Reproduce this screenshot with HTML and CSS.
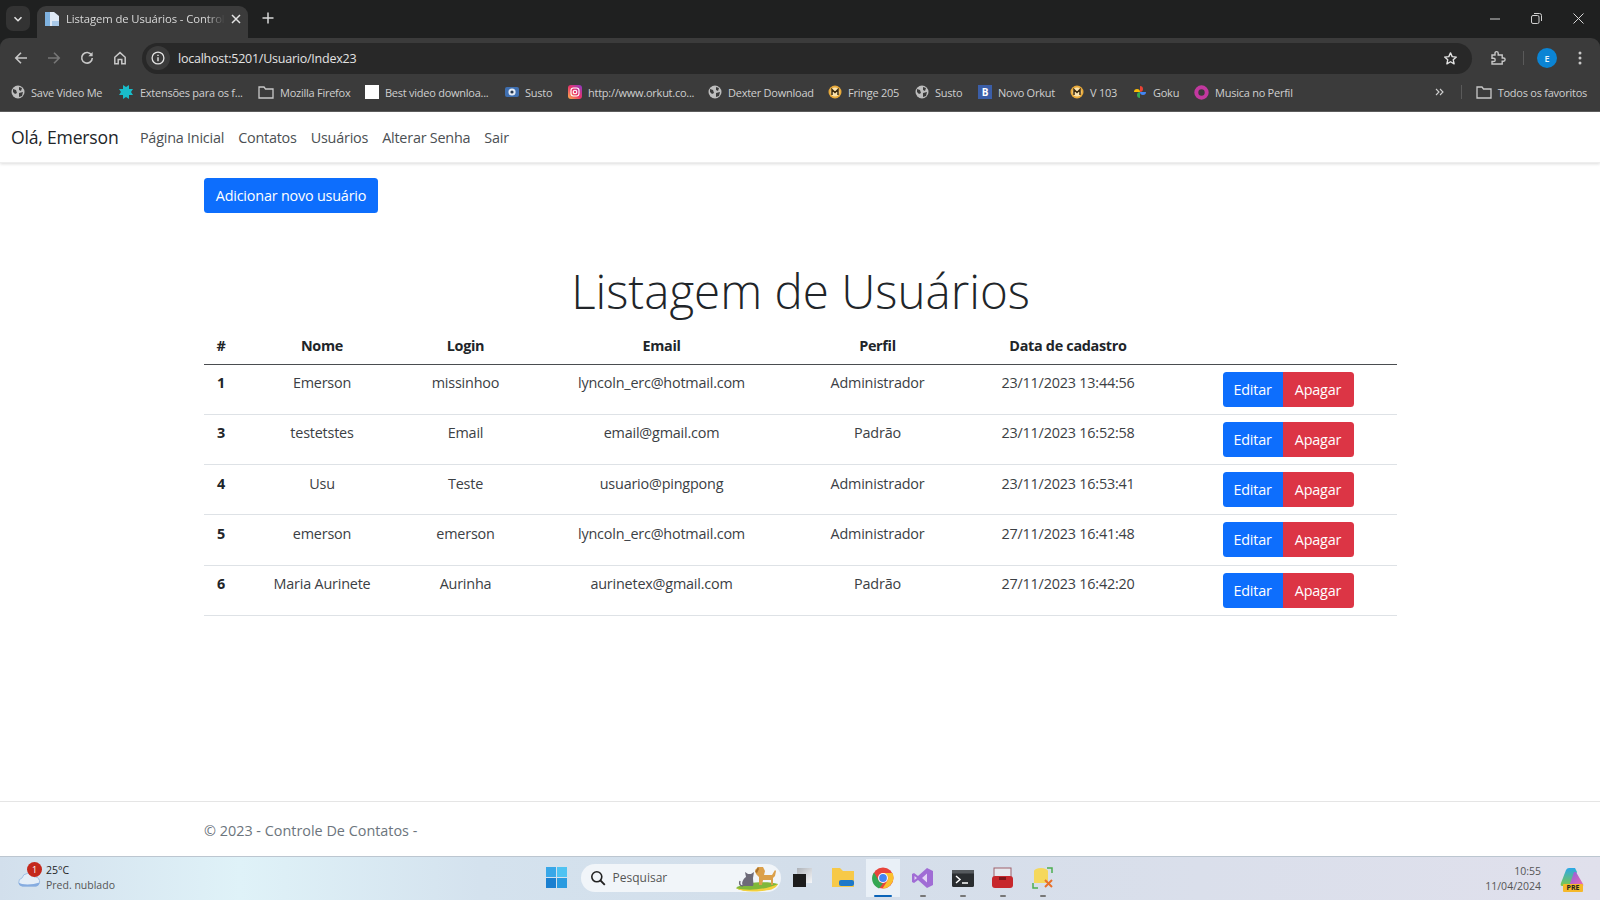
FILE: index.html
```html
<!DOCTYPE html>
<html lang="pt-BR">
<head>
<meta charset="utf-8">
<title>Listagem de Usuários - Controle De Contatos</title>
<link rel="stylesheet" href="styles.css">
</head>
<body>
<header class="browser">
  <div class="tabstrip">
    <button class="tab-search"><svg width="12" height="12" viewBox="0 0 12 12"><path d="M2.500 4.200 6 7.700l3.500-3.500" fill="none" stroke="#e3e3e3" stroke-width="1.600"/></svg></button>
    <div class="tab">
      <svg class="tab-fav" width="16" height="16" viewBox="0 0 16 16"><path d="M1 1h9l5 4v10H1z" fill="#dfe9f5"/><path d="M1 1h5v14H1z" fill="#7fb2e0"/><path d="M8 10h7v5H8z" fill="#a9c9e8"/></svg>
      <span class="tab-title">Listagem de Usuários - Control</span>
      <svg class="tab-x" width="10" height="10" viewBox="0 0 10 10"><path d="M1 1l8 8M9 1 1 9" stroke="#e3e3e3" stroke-width="1.500"/></svg>
    </div>
    <svg class="tab-new" width="12" height="12" viewBox="0 0 12 12"><path d="M6 .5v11M.5 6h11" stroke="#d8d8d8" stroke-width="1.500"/></svg>
    <div class="win-ctrl">
      <svg width="10" height="10" viewBox="0 0 10 10"><path d="M0 5h10" stroke="#d0d0d0"/></svg>
      <svg width="11" height="11" viewBox="0 0 11 11"><rect x=".5" y="2.500" width="7.500" height="8" rx="1.500" fill="none" stroke="#d0d0d0"/><path d="M3 .5h5.500a2 2 0 0 1 2 2V8" fill="none" stroke="#d0d0d0"/></svg>
      <svg width="11" height="11" viewBox="0 0 11 11"><path d="M.5.5l10 10M10.500.5l-10 10" stroke="#d8d8d8"/></svg>
    </div>
  </div>
  <div class="toolbar">
    <svg class="tb-icon" width="14" height="14" viewBox="0 0 14 14"><path d="M13 7H2M7 1.800 1.800 7 7 12.200" fill="none" stroke="#c8c8c8" stroke-width="1.600"/></svg>
    <svg class="tb-icon" width="14" height="14" viewBox="0 0 14 14"><path d="M1 7h11M7 1.800 12.200 7 7 12.200" fill="none" stroke="#777" stroke-width="1.600"/></svg>
    <svg class="tb-icon" width="14" height="14" viewBox="0 0 14 14"><path d="M11.600 4.200A5.300 5.300 0 1 0 12.300 7" fill="none" stroke="#c8c8c8" stroke-width="1.600"/><path d="M12.600 1v4.300H8.300z" fill="#c8c8c8"/></svg>
    <svg class="tb-icon" width="14" height="14" viewBox="0 0 14 14"><path d="M1.800 6.300 7 1.600l5.200 4.700v6.400H8.800V8.600H5.200v4.100H1.800z" fill="none" stroke="#c8c8c8" stroke-width="1.500"/></svg>
    <div class="omnibox">
      <span class="site-info"><svg width="14" height="14" viewBox="0 0 14 14"><circle cx="7" cy="7" r="5.900" fill="none" stroke="#e3e3e3" stroke-width="1.300"/><path d="M7 6.200v4M7 3.700v1.400" stroke="#e3e3e3" stroke-width="1.400"/></svg></span>
      <span class="url">localhost:5201/Usuario/Index23</span>
      <svg class="star" width="15" height="15" viewBox="0 0 24 24"><path d="m12 3 2.700 6 6.600.7-4.900 4.400 1.400 6.500L12 17.200l-5.800 3.400 1.400-6.500-4.900-4.400 6.600-.7z" fill="none" stroke="#e3e3e3" stroke-width="2.200" stroke-linejoin="round"/></svg>
    </div>
    <svg class="puzzle" width="16" height="16" viewBox="0 0 16 16"><path d="M2 5h3V3.200a1.600 1.600 0 0 1 3.200 0V5h4v3h1.300a1.600 1.600 0 0 1 0 3.200h-1.300V14H2v-2.500h1.600a1.600 1.600 0 0 0 0-3.200H2z" fill="none" stroke="#c8c8c8" stroke-width="1.400"/></svg>
    <span class="tb-sep"></span>
    <span class="avatar">E</span>
    <svg class="kebab" width="4" height="14" viewBox="0 0 4 14"><circle cx="2" cy="2" r="1.500" fill="#c8c8c8"/><circle cx="2" cy="7" r="1.500" fill="#c8c8c8"/><circle cx="2" cy="12" r="1.500" fill="#c8c8c8"/></svg>
  </div>
  <nav class="bookmarks">
    <a class="bm"><svg width="14" height="14" viewBox="0 0 14 14"><circle cx="7" cy="7" r="6.500" fill="#bdbdbd"/><path d="M2 4l3 1 1 3-2 1-2-2zM8 2l3 1-1 3-2-1zM8 8l4-1-1 4-3 1z" fill="#3b3b3b"/></svg>Save Video Me</a>
    <a class="bm"><svg width="16" height="16" viewBox="0 0 16 16"><path d="M1 5h4V1l3 2 3-2v4h4l-2 3 2 3h-4v4l-3-2-3 2v-4H1l2-3z" fill="#19bcc9"/></svg>Extensões para os f...</a>
    <a class="bm"><svg width="16" height="14" viewBox="0 0 16 14"><path d="M1 2h5l1.500 2H15v9H1z" fill="none" stroke="#c8c8c8" stroke-width="1.300"/></svg>Mozilla Firefox</a>
    <a class="bm"><span class="white-box"></span>Best video downloa...</a>
    <a class="bm"><svg width="14" height="14" viewBox="0 0 14 14"><rect y="2" width="14" height="10" rx="2" fill="#3f6fb0"/><circle cx="7" cy="7" r="3.600" fill="#e4ecf6"/><circle cx="7" cy="7" r="1.600" fill="#25374f"/></svg>Susto</a>
    <a class="bm"><svg width="14" height="14" viewBox="0 0 14 14"><defs><linearGradient id="ig" x1="0" y1="1" x2="1" y2="0"><stop offset="0" stop-color="#fdb44b"/><stop offset=".5" stop-color="#e8336b"/><stop offset="1" stop-color="#8a3ac8"/></linearGradient></defs><rect width="14" height="14" rx="3" fill="url(#ig)"/><rect x="3" y="3" width="8" height="8" rx="2.400" fill="none" stroke="#fff" stroke-width="1.100"/><circle cx="7" cy="7" r="1.800" fill="none" stroke="#fff" stroke-width="1.100"/></svg>http://www.orkut.co...</a>
    <a class="bm"><svg width="14" height="14" viewBox="0 0 14 14"><circle cx="7" cy="7" r="6.500" fill="#bdbdbd"/><path d="M2 4l3 1 1 3-2 1-2-2zM8 2l3 1-1 3-2-1zM8 8l4-1-1 4-3 1z" fill="#3b3b3b"/></svg>Dexter Download</a>
    <a class="bm"><svg width="14" height="14" viewBox="0 0 14 14"><circle cx="7" cy="7" r="6.500" fill="#e8a93a"/><circle cx="7" cy="7" r="4.500" fill="#fbe3ad"/><path d="M4 10V4.500L7 7.500l3-3V10" fill="none" stroke="#3a2a10" stroke-width="1.500"/></svg>Fringe 205</a>
    <a class="bm"><svg width="14" height="14" viewBox="0 0 14 14"><circle cx="7" cy="7" r="6.500" fill="#bdbdbd"/><path d="M2 4l3 1 1 3-2 1-2-2zM8 2l3 1-1 3-2-1zM8 8l4-1-1 4-3 1z" fill="#3b3b3b"/></svg>Susto</a>
    <a class="bm"><span class="b-box">B</span>Novo Orkut</a>
    <a class="bm"><svg width="14" height="14" viewBox="0 0 14 14"><circle cx="7" cy="7" r="6.500" fill="#e8a93a"/><circle cx="7" cy="7" r="4.500" fill="#fbe3ad"/><path d="M4 10V4.500L7 7.500l3-3V10" fill="none" stroke="#3a2a10" stroke-width="1.500"/></svg>V 103</a>
    <a class="bm"><svg width="14" height="14" viewBox="0 0 14 14"><path d="M7 7V1a3 3 0 0 1 0 6z" fill="#ea4335"/><path d="M7 7h6a3 3 0 0 1-6 0z" fill="#4285f4"/><path d="M7 7v6a3 3 0 0 1 0-6z" fill="#34a853"/><path d="M7 7H1a3 3 0 0 1 6 0z" fill="#fbbc05"/></svg>Goku</a>
    <a class="bm"><svg width="15" height="15" viewBox="0 0 15 15"><circle cx="7.500" cy="7.500" r="5.200" fill="none" stroke="#c2389f" stroke-width="4"/></svg>Musica no Perfil</a>
    <span class="bm-spacer"></span>
    <svg class="chev" width="9" height="8" viewBox="0 0 9 8"><path d="M1 1l3 3-3 3M5 1l3 3-3 3" fill="none" stroke="#d0d0d0" stroke-width="1.100"/></svg>
    <span class="bm-sep"></span>
    <a class="bm-all"><svg width="16" height="14" viewBox="0 0 16 14"><path d="M1 2h5l1.500 2H15v9H1z" fill="none" stroke="#c8c8c8" stroke-width="1.300"/></svg>Todos os favoritos</a>
  </nav>
</header>

<div class="page">
  <nav class="navbar">
    <span class="brand">Olá, Emerson</span>
    <a class="nav-link">Página Inicial</a>
    <a class="nav-link">Contatos</a>
    <a class="nav-link">Usuários</a>
    <a class="nav-link">Alterar Senha</a>
    <a class="nav-link">Sair</a>
  </nav>
  <main class="container">
    <a class="btn btn-primary btn-add">Adicionar novo usuário</a>
    <h1 class="title">Listagem de Usuários</h1>
    <table class="table">
      <colgroup><col class="c1"><col class="c2"><col class="c3"><col class="c4"><col class="c5"><col class="c6"><col class="c7"></colgroup>
      <thead><tr><th>#</th><th>Nome</th><th>Login</th><th>Email</th><th>Perfil</th><th>Data de cadastro</th><th></th></tr></thead>
      <tbody>
        <tr><th>1</th><td>Emerson</td><td>missinhoo</td><td>lyncoln_erc@hotmail.com</td><td>Administrador</td><td>23/11/2023 13:44:56</td><td class="actions"><div class="btn-group"><a class="btn btn-primary">Editar</a><a class="btn btn-danger">Apagar</a></div></td></tr>
        <tr><th>3</th><td>testetstes</td><td>Email</td><td>email@gmail.com</td><td>Padrão</td><td>23/11/2023 16:52:58</td><td class="actions"><div class="btn-group"><a class="btn btn-primary">Editar</a><a class="btn btn-danger">Apagar</a></div></td></tr>
        <tr><th>4</th><td>Usu</td><td>Teste</td><td>usuario@pingpong</td><td>Administrador</td><td>23/11/2023 16:53:41</td><td class="actions"><div class="btn-group"><a class="btn btn-primary">Editar</a><a class="btn btn-danger">Apagar</a></div></td></tr>
        <tr><th>5</th><td>emerson</td><td>emerson</td><td>lyncoln_erc@hotmail.com</td><td>Administrador</td><td>27/11/2023 16:41:48</td><td class="actions"><div class="btn-group"><a class="btn btn-primary">Editar</a><a class="btn btn-danger">Apagar</a></div></td></tr>
        <tr><th>6</th><td>Maria Aurinete</td><td>Aurinha</td><td>aurinetex@gmail.com</td><td>Padrão</td><td>27/11/2023 16:42:20</td><td class="actions"><div class="btn-group"><a class="btn btn-primary">Editar</a><a class="btn btn-danger">Apagar</a></div></td></tr>
      </tbody>
    </table>
  </main>
  <footer class="footer">© 2023 - Controle De Contatos -</footer>
</div>

<footer class="taskbar">
  <div class="weather">
    <span class="weather-icon">
      <svg width="24" height="15" viewBox="0 0 24 15"><path d="M5.500 14a4 4 0 0 1-.6-7.900A6.500 6.500 0 0 1 17 5a4.500 4.500 0 0 1 2 9z" fill="#e4eef8" stroke="#9fbfe4"/><path d="M1.500 10.500c3 2.500 14 2.500 21 0a4.500 4.500 0 0 1-3.500 4H5.500a4.500 4.500 0 0 1-4-4z" fill="#86ace0"/></svg>
      <span class="badge">1</span>
    </span>
    <span class="weather-text"><span class="temp">25°C</span><span class="cond">Pred. nublado</span></span>
  </div>
  <div class="task-center">
    <svg class="task-win" width="21" height="21" viewBox="0 0 21 21"><path d="M0 0h10v10H0z" fill="#38a7e8"/><path d="M11 0h10v10H11z" fill="#4fc3f2"/><path d="M0 11h10v10H0z" fill="#1a7fd0"/><path d="M11 11h10v10H11z" fill="#2a9be0"/></svg>
    <div class="search">
      <svg width="16" height="16" viewBox="0 0 16 16"><circle cx="6.800" cy="6.800" r="5" fill="none" stroke="#222" stroke-width="1.600"/><path d="m10.500 10.500 4.300 4.300" stroke="#222" stroke-width="1.800"/></svg>
      <span class="search-label">Pesquisar</span>
      <svg class="search-art" width="44" height="28" viewBox="0 0 44 28"><path d="M1 24c8-6 32-7 42-4-3 7-36 9-42 4z" fill="#7fb83a"/><path d="M1 24c10 3 30 2 42-4-3 6-9 6-16 7-10 1-20 1-26-3z" fill="#f2d03c"/><path d="M8 22c-2-3 0-7 3-9l-1-5 3 2h3l3-2-1 6c0 4 1 6 0 8z" fill="#6d6a78"/><path d="M8 22c-3 0-4-2-3-5" fill="none" stroke="#6d6a78" stroke-width="1.500"/><path d="M24 21V13l-3-3-1-4 3-3h5l2 4-1 4h8l3-5 1 1-1 5-2 2v7h-2v-5h-8l-1 5z" fill="#dba04a"/><path d="M23 3l-3 5 2 1 2-4z" fill="#a9702a"/></svg>
    </div>
    <span class="task-item"><svg width="21" height="21" viewBox="0 0 21 21"><defs><linearGradient id="tv" x1="0" y1="0" x2="1" y2="1"><stop offset="0" stop-color="#aeb2b8"/><stop offset="1" stop-color="#f6f7f9"/></linearGradient></defs><rect x="5" y="1" width="15" height="15" fill="url(#tv)"/><rect x="1" y="7" width="13" height="13" fill="#1c1c1c"/></svg></span>
    <span class="task-item"><svg width="24" height="21" viewBox="0 0 24 21"><path d="M1 1h8l3 3h11v16H1z" fill="#f7c948"/><rect x="8" y="13" width="15" height="6" rx="2" fill="#1d78c9"/></svg></span>
    <span class="task-item task-active"><svg width="22" height="22" viewBox="0 0 22 22"><circle cx="11" cy="11" r="10.500" fill="#e8453c"/><path d="M2 5.500 7 14a4.800 4.800 0 0 0 4 2.500L7 21.400A10.500 10.500 0 0 1 2 5.500z" fill="#34a853"/><path d="M11 6h9.500a10.500 10.500 0 0 1-1 10.500 10.500 10.500 0 0 1-9 5L15 14.500A5 5 0 0 0 15.500 9z" fill="#fbc02d"/><circle cx="11" cy="11" r="5" fill="#fff"/><circle cx="11" cy="11" r="3.900" fill="#4285f4"/></svg><span class="run run-blue"></span></span>
    <span class="task-item"><svg width="22" height="22" viewBox="0 0 22 22"><path d="M15 1l6 3v14l-6 3-9-8-4 3-2-1V7l2-1 4 3z" fill="#a06cd5"/><path d="M15 6.500 10 11l5 4.500z" fill="#e3d4f6"/><path d="M2.500 9v4L5 11z" fill="#e3d4f6"/></svg><span class="run"></span></span>
    <span class="task-item"><svg width="22" height="20" viewBox="0 0 22 20"><rect y="2" width="22" height="17" rx="1.500" fill="#2a2d30"/><rect y="2" width="22" height="3.500" fill="#55595d"/><path d="M4 8l4 3.500L4 15" fill="none" stroke="#fff" stroke-width="1.500"/><path d="M10 15h6" stroke="#fff" stroke-width="1.500"/></svg><span class="run"></span></span>
    <span class="task-item"><svg width="21" height="22" viewBox="0 0 21 22"><rect x="2" y="1" width="17" height="10" fill="#e6e8ee" stroke="#a0606a"/><path d="M0 12q0-3 3-3h15q3 0 3 3v6q0 3-3 3H3q-3 0-3-3z" fill="#c7272c"/><rect x="7" y="10" width="7" height="3" fill="#7e1518"/></svg><span class="run"></span></span>
    <span class="task-item"><svg width="22" height="22" viewBox="0 0 22 22"><ellipse cx="9" cy="4" rx="7" ry="3" fill="#f5d85c"/><path d="M2 4h14v12H2z" fill="#f5d85c"/><path d="M13 13l7 7M20 13l-7 7" stroke="#e8702a" stroke-width="2"/><path d="M15 1h5v5M1 16v5h5" fill="none" stroke="#4caf50" stroke-width="1.500"/></svg><span class="run"></span></span>
  </div>
  <div class="tray">
    <span class="clock"><span>10:55</span><span>11/04/2024</span></span>
    <span class="copilot">
      <svg width="24" height="24" viewBox="0 0 24 24"><defs><linearGradient id="cpa" x1="0" y1="0" x2="0" y2="1"><stop offset="0" stop-color="#2aa8e8"/><stop offset="1" stop-color="#7fc84a"/></linearGradient><linearGradient id="cpb" x1="0" y1="0" x2="1" y2="1"><stop offset="0" stop-color="#8a5fe0"/><stop offset="1" stop-color="#ee6cb0"/></linearGradient></defs><path d="M9 1h6l2 4-6 14H2q-2 0-1-3l5-13q1-2 3-2z" fill="url(#cpa)"/><path d="M14 5h2l7 12q1 2-1 2H9l3-8z" fill="url(#cpb)"/></svg>
      <span class="pre">PRE</span>
    </span>
  </div>
</footer>
</body>
</html>
```

FILE: styles.css
```css
* { box-sizing: border-box; }
html, body { margin: 0; height: 100%; }
body {
  width: 1600px; height: 900px; overflow: hidden;
  display: flex; flex-direction: column;
  font-family: "Open Sans", "Noto Sans", sans-serif;
  background: #fff; color: #212529;
}
svg { flex: none; display: block; }

/* Browser */
.browser { height: 112px; flex: none; background: #1f2020; color: #d8d8d8; }
.tabstrip { height: 38px; display: flex; align-items: flex-end; }
.tab-search {
  width: 24px; height: 25px; margin: 0 7px 7px 6px; padding: 0; border: 0; border-radius: 7px;
  background: #333; display: flex; align-items: center; justify-content: center;
}
.tab {
  width: 211px; height: 32px; background: #3b3b3b; border-radius: 9px 9px 0 0;
  display: flex; align-items: center; padding: 0 7px 7px 7px; gap: 6px;
}
.tab-title {
  flex: 1; min-width: 0; white-space: nowrap; font-size: 11.300px; letter-spacing: -.1px; color: #d8d8d8;
  -webkit-mask-image: linear-gradient(90deg, #000 88%, transparent 100%);
  mask-image: linear-gradient(90deg, #000 88%, transparent 100%);
}
.tab-new { margin: 0 0 14px 14px; }
.win-ctrl { margin: 0 16px 14px auto; display: flex; align-items: center; gap: 31px; }

.toolbar {
  height: 40px; background: #3b3b3b; border-radius: 9px 9px 0 0;
  display: flex; align-items: center; padding: 0 0 0 14px; gap: 19px;
}
.omnibox {
  width: 1330px; height: 31px; margin-left: -4px; background: #282828; border-radius: 16px;
  display: flex; align-items: center; padding: 0 14px 0 4px;
}
.site-info {
  width: 24px; height: 24px; border-radius: 50%; background: #3b3b3b;
  display: flex; align-items: center; justify-content: center;
}
.url { margin-left: 8px; font-size: 12.500px; letter-spacing: -.24px; color: #e3e3e3; }
.star { margin-left: auto; }
.puzzle { margin-left: -1px; }
.tb-sep { width: 1px; height: 14px; background: #5a5a5a; margin: 0 -2px; }
.avatar {
  width: 20px; height: 20px; margin-left: -4px; border-radius: 50%; background: #0b84d4; color: #e8f4fc;
  font-size: 9px; display: flex; align-items: center; justify-content: center; font-weight: 600;
}
.kebab { margin-left: 2px; }

.bookmarks {
  height: 34px; background: #3b3b3b; border-bottom: 1px solid #5f5f5f;
  display: grid; align-items: center; padding: 0 13px 5px 11px;
  grid-template-columns: 107px 140px 107px 140px 63px 140px 120px 87px 63px 92px 63px 61px 120px 1fr 26px 16px 110px;
  font-size: 11px; letter-spacing: -.25px; color: #cfcfcf;
}
.bm { display: flex; align-items: center; gap: 6px; white-space: nowrap; }
.bm-all { display: flex; align-items: center; gap: 6px; white-space: nowrap; justify-content: flex-end; }
.bm-sep { width: 1px; height: 14px; background: #5a5a5a; }
.white-box { width: 14px; height: 14px; background: #fff; }
.b-box {
  width: 14px; height: 14px; background: #3b5ea8; color: #fff; font-size: 10px; font-weight: 700;
  display: flex; align-items: center; justify-content: center;
}

/* Page */
.page { flex: 1; min-height: 0; display: flex; flex-direction: column; }
.navbar {
  height: 51px; flex: none; display: flex; align-items: center; padding: 0 11px;
  box-shadow: 0 1px 3px rgba(0, 0, 0, .14); border-bottom: 1px solid #eee;
}
.brand { font-size: 17.600px; letter-spacing: -.2px; margin-right: 21.400px; }
.nav-link { font-size: 14.400px; letter-spacing: -.22px; margin-right: 14px; color: #4b4f53; }
.container { flex: 1; padding: 15px 203px 0 204px; }
.btn {
  display: inline-flex; align-items: center; justify-content: center;
  height: 35px; font-size: 14.400px; letter-spacing: -.2px; color: #fff; border-radius: 3.500px;
}
.btn-primary { background: #0d6efd; }
.btn-danger { background: #dc3545; }
.btn-add { width: 174px; }
.title {
  margin: 0; padding-top: 46px; height: 117px; text-align: center;
  font-size: 47.500px; font-weight: 300; line-height: 64px; color: #212529;
}
.table { width: 1193px; border-collapse: collapse; table-layout: fixed; font-size: 14.400px; letter-spacing: -.2px; }
.c1 { width: 34px; } .c2 { width: 168px; } .c3 { width: 119px; } .c4 { width: 273px; }
.c5 { width: 159px; } .c6 { width: 222px; } .c7 { width: 218px; }
.table th, .table td { text-align: center; vertical-align: top; }
.table thead th { height: 34px; padding: 6px 0 0; border-bottom: 1px solid #4a4d50; font-weight: 700; letter-spacing: -.3px; }
.table tbody th, .table tbody td {
  height: 50.300px; padding: 8.500px 0 0; border-bottom: 1px solid #dee2e6; color: #3b4044; font-weight: 400;
}
.table tbody th { font-weight: 700; color: #212529; }
.table tbody .actions { padding: 7px 0 0 0; }
.btn-group { display: inline-flex; }
.btn-group .btn-primary { width: 60px; border-radius: 3.500px 0 0 3.500px; }
.btn-group .btn-danger { width: 71px; border-radius: 0 3.500px 3.500px 0; }
.footer {
  height: 55px; flex: none; border-top: 1px solid #e5e5e5; padding: 19px 0 0 204px;
  font-size: 14.400px; color: #6c757d;
}

/* Taskbar */
.taskbar {
  height: 44px; flex: none; display: grid; grid-template-columns: 1fr auto 1fr; align-items: center;
  border-top: 1px solid #bcc6d0;
  background: linear-gradient(90deg, #d2dfec 0, #dff2f8 15%, #d4e2ee 30%, #d3deea 50%, #dadfeb 75%, #e0e0ec 100%);
  font-size: 11px;
}
.weather { display: flex; align-items: center; padding-left: 17px; gap: 6px; }
.weather-icon { position: relative; width: 23px; height: 34px; padding-bottom: 9px; display: flex; align-items: flex-end; }
.badge {
  position: absolute; left: 10px; top: 0; width: 15px; height: 15px; border-radius: 50%;
  background: #c4281c; color: #fff; font-size: 9px; display: flex; align-items: center; justify-content: center;
}
.weather-text { display: flex; flex-direction: column; line-height: 15px; margin-top: -1px; }
.temp { color: #222; font-size: 10.500px; }
.cond { color: #555; font-size: 10.500px; }
.task-center { display: flex; align-items: center; margin: 0 0 2px 8px; }
.task-win { margin-right: 14px; }
.search {
  width: 200px; height: 28px; border-radius: 14px; background: #f1f5f9;
  display: flex; align-items: center; padding: 0 2px 0 9px; margin-right: 2px;
}
.search-label { margin-left: 7px; font-size: 12px; color: #555; }
.search-art { margin-left: auto; }
.task-item {
  position: relative; width: 40px; height: 40px; display: flex; align-items: center; justify-content: center;
}
.task-active { background: linear-gradient(#e9f0f7, #e9f0f7) center / 34px 38px no-repeat; }
.run { position: absolute; bottom: 1px; left: 17px; width: 6px; height: 2px; background: #777; border-radius: 1px; }
.run-blue { left: 11px; width: 18px; background: #0a63b8; }
.tray { display: flex; justify-content: flex-end; align-items: center; padding-right: 16px; gap: 19px; }
.clock { display: flex; flex-direction: column; align-items: flex-end; line-height: 15px; font-size: 10.500px; color: #555; }
.copilot { position: relative; width: 24px; height: 24px; }
.pre {
  position: absolute; left: 3px; bottom: -1px; width: 20px; height: 8px; background: #f5b82a; border-radius: 1px;
  font-size: 7px; line-height: 8px; font-weight: 700; text-align: center; color: #222;
}
```
